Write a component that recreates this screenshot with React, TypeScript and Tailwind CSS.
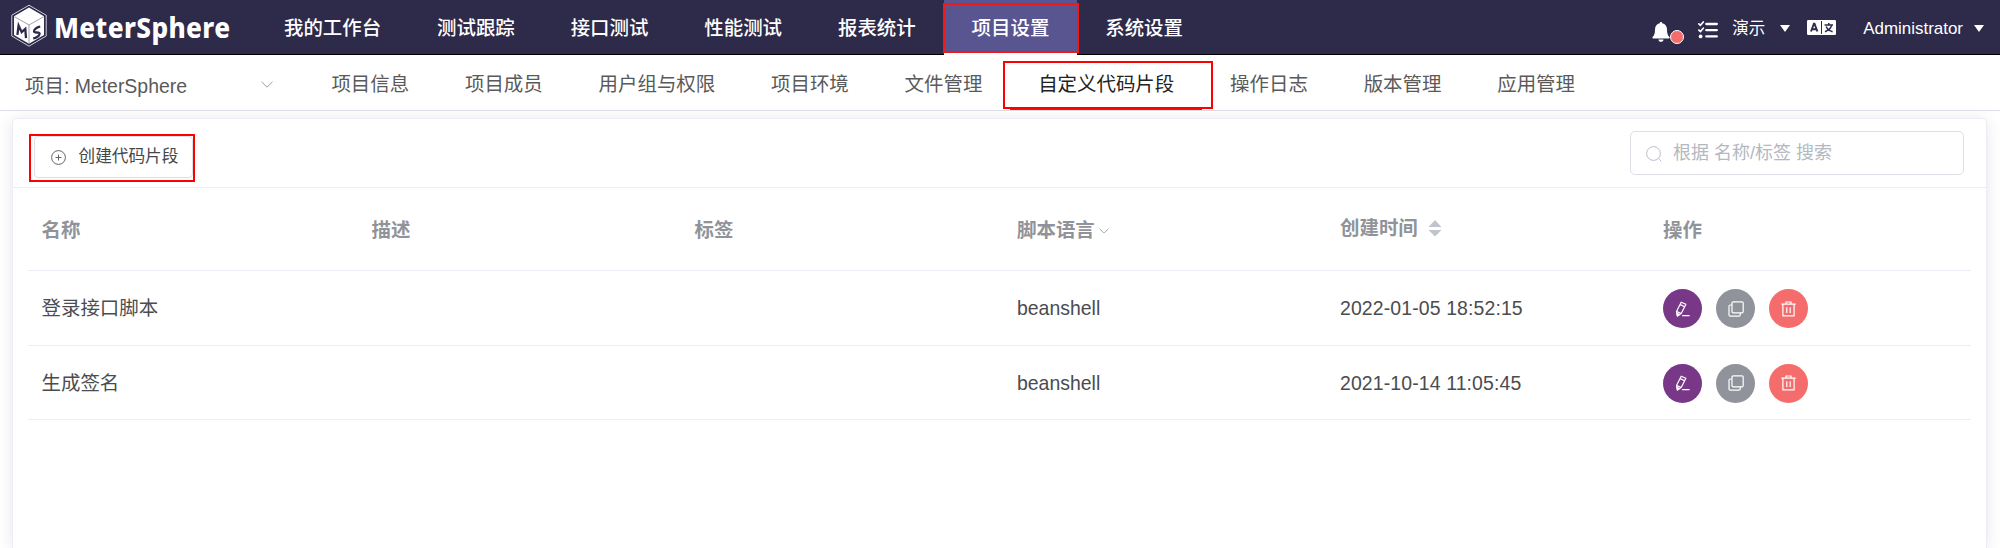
import React from "react";

const topItems = ["我的工作台", "测试跟踪", "接口测试", "性能测试", "报表统计", "项目设置", "系统设置"];
const subItems = ["项目信息", "项目成员", "用户组与权限", "项目环境", "文件管理", "自定义代码片段", "操作日志", "版本管理", "应用管理"];
const rows = [
  { name: "登录接口脚本", lang: "beanshell", time: "2022-01-05 18:52:15" },
  { name: "生成签名", lang: "beanshell", time: "2021-10-14 11:05:45" },
];

function Logo() {
  return (
    <svg width="38" height="44" viewBox="0 0 38 44" className="shrink-0">
      <path d="M19 1.2 36.2 11.2V32L19 42.2 1.8 32V11.2Z" fill="none" stroke="#cfcddb" strokeWidth="1" />
      <path d="M19 3.600 34 12.300V31L19 39.800 4 31V12.300Z" fill="#fff" />
      <path d="M4.200 12.600 19 21 33.800 12.600M19 21v18.500" fill="none" stroke="#77758a" strokeWidth="0.7" />
      <path d="M7.400 30.800 8.600 21.600 11.700 28.200 15.300 25 16 34.200" fill="none" stroke="#2d2a4a" strokeWidth="2.300" />
      <path d="M30.200 22.700C27.500 23 24 25 24 27.300c0 2.200 5.600.2 5.600 2.500 0 2.200-3.500 4.200-6.400 4.500" fill="none" stroke="#2d2a4a" strokeWidth="2.300" />
    </svg>
  );
}

function Bell() {
  return (
    <svg width="18" height="20" viewBox="0 0 18 20" fill="#fff">
      <path d="M9 0c.8 0 1.200.5 1.200 1.300C13.400 2 15 4.600 15 7.500c0 4 .7 5.800 2.400 7.500.5.600.2 1.400-.6 1.400H1.200c-.8 0-1.100-.8-.6-1.400C2.300 13.300 3 11.500 3 7.500c0-2.900 1.600-5.500 4.800-6.200C7.800.5 8.200 0 9 0ZM6.500 17.400h5c0 1.400-1.100 2.400-2.500 2.400s-2.500-1-2.500-2.400Z" />
    </svg>
  );
}

function Tasks() {
  return (
    <svg width="20" height="18" viewBox="0 0 20 18" fill="none" stroke="#fff" strokeLinecap="round">
      <path d="M8.300 3H18.800M8.300 9.200H18.800M8.300 15.400H18.800" strokeWidth="2.300" />
      <path d="m.9 2.900 1.500 1.400L5.300 1M.9 9.100l1.500 1.400L5.300 7.200" strokeWidth="1.700" />
      <circle cx="2.600" cy="15.400" r="1.900" fill="#fff" stroke="none" />
    </svg>
  );
}

function Language() {
  return (
    <svg width="29" height="15" viewBox="0 0 29 15">
      <rect width="29" height="15" rx="1.300" fill="#fff" />
      <path d="M14.500 1v13" stroke="#2d2a4a" strokeWidth="1" />
      <path d="M4 11.500 6.900 3.600h.6l2.900 7.900M5 9.300h4.500" fill="none" stroke="#2d2a4a" strokeWidth="1.900" />
      <path d="M17.600 5h8.400M21.800 3v2M24.600 5.200c-.6 2.800-3 5.200-6.600 6.500M19.200 6.500c1 2.500 3.300 4.500 6.400 5.200" fill="none" stroke="#2d2a4a" strokeWidth="1.500" />
    </svg>
  );
}

function Caret() {
  return (
    <svg width="10" height="7" viewBox="0 0 10 7" fill="#fff"><path d="M0 0h10L5 7Z" /></svg>
  );
}

function Chevron({ size, color }: { size: number; color: string }) {
  return (
    <svg width={size} height={size * 0.58} viewBox="0 0 12 7" fill="none" stroke={color}>
      <path d="m.5.800 5.500 5.400L11.500.8" />
    </svg>
  );
}

function Actions() {
  return (
    <div className="flex gap-[14px]">
      <button className="flex h-[39px] w-[39px] items-center justify-center rounded-full bg-[#783887]">
        <svg width="15" height="16" viewBox="0 0 15 16" fill="none" stroke="#fff" strokeWidth="1.200" strokeLinejoin="round" strokeLinecap="round">
          <path d="M6.200 1.200 10.900 3.300 6.200 12.500 2.400 14.900 1.500 10.400ZM5.200 3.600l4.500 2.100M1.500 10.400l4.700 2.100M7.600 14.700h6.600" />
          <path d="M1.900 12.300 4.400 13.600 2.400 14.900Z" fill="#fff" />
        </svg>
      </button>
      <button className="flex h-[39px] w-[39px] items-center justify-center rounded-full bg-[#909399]">
        <svg width="16" height="16" viewBox="0 0 16 16" fill="none" stroke="#fff" strokeWidth="1.200">
          <rect x="4" y=".8" width="11.200" height="11" rx="1.300" />
          <path d="M4 4H2.200Q1 4 1 5.200V14q0 1.200 1.200 1.200H11q1.200 0 1.200-1.200v-2.200" />
        </svg>
      </button>
      <button className="flex h-[39px] w-[39px] items-center justify-center rounded-full bg-[#f56c6c]">
        <svg width="15" height="16" viewBox="0 0 15 16" fill="none" stroke="#fff" strokeWidth="1.200">
          <path d="M.3 3.200h14.400M1.900 3.200v11.600h11.200V3.200M5 3V1h5v2M5.800 6.200v5.800M9.200 6.200v5.800" />
        </svg>
      </button>
    </div>
  );
}

export default function App() {
  return (
    <div className="flex h-[548px] w-[2000px] flex-col overflow-hidden bg-white font-['Liberation_Sans','Noto_Sans_CJK_SC',sans-serif] text-[19.450px] text-[#303133]">
      <header className="flex h-[55px] shrink-0 bg-[#2d2a4a] font-medium text-white shadow-[inset_0_-1px_0_#000]">
        <div className="flex w-[256px] shrink-0 items-start gap-[6px] pt-[4px] pl-[10px]">
          <Logo />
          <span className="origin-left scale-x-[0.935] pt-[6px] font-['Noto_Sans',sans-serif] text-[28px] leading-[34px] font-extrabold tracking-[0.4px]">MeterSphere</span>
        </div>
        <nav className="flex">
          {topItems.map((t) => (
            <div key={t} className={t === "项目设置" ? "relative h-[55px] border-b-2 border-white bg-[#595591] px-[27.950px] leading-[57px] whitespace-nowrap" : "px-[27.950px] leading-[57px] whitespace-nowrap"}>
              {t}
              {t === "项目设置" && <span className="absolute top-[3px] -right-[2px] -left-[1px] h-[50px] border-2 border-[#f01818]" />}
            </div>
          ))}
        </nav>
        <div className="ml-auto flex pr-[16px]">
          <div className="relative mt-[22px] mr-[28px] h-5 w-[18px]">
            <Bell />
            <span className="absolute top-[8px] left-[18px] h-[14px] w-[14px] rounded-full border border-white bg-[#f56c6c]" />
          </div>
          <div className="mt-[21px] mr-[14px]"><Tasks /></div>
          <span className="mr-[15px] text-[16.500px] leading-[57px] font-normal">演示</span>
          <div className="mt-[25px] mr-[17px]"><Caret /></div>
          <div className="mt-[20px] mr-[27px]"><Language /></div>
          <span className="mr-[11px] text-[16.950px] leading-[57px] font-normal">Administrator</span>
          <div className="mt-[25px]"><Caret /></div>
        </div>
      </header>
      <div className="flex h-[56px] shrink-0 border-b border-[#dcdfe6] text-[#5a5a5a]">
        <div className="flex w-[303.500px] shrink-0 items-start pl-[25px] leading-[62px]">
          <span className="w-[236px] whitespace-nowrap">项目: MeterSphere</span>
          <div className="pt-[26px]"><Chevron size={12} color="#9a9ca0" /></div>
        </div>
        {subItems.map((t) => (
          <div key={t} className={t === "自定义代码片段" ? "relative border-b border-[#783887] px-[27.920px] leading-[59px] whitespace-nowrap text-[#222]" : "px-[27.920px] leading-[59px] whitespace-nowrap"}>
            {t}
            {t === "自定义代码片段" && <span className="absolute top-[6px] -right-[11px] -left-[7px] h-[48px] border-2 border-[#f00]" />}
          </div>
        ))}
      </div>
      <main className="flex grow flex-col pt-[7px] pr-[13px] pl-[12px]">
        <section className="flex grow flex-col rounded-t-[5px] border-x border-t border-[#ebeef5] bg-white shadow-[0_2px_16px_rgba(0,0,0,0.1)]">
          <div className="flex h-[69px] shrink-0 justify-between border-b border-[#ebeef5] pr-[22px] pl-[16px]">
            <div className="mt-[15px] flex h-[48px] w-[166px] border-2 border-[#f00] pl-[3px]">
              <button className="flex h-[42px] w-full items-center rounded-[4px] border border-[#dcdfe6] pt-px pl-[16px] text-[16.650px] text-[#45474b]">
                <svg width="15" height="15" viewBox="0 0 15 15" fill="none" stroke="#606266" className="mr-[12.500px]">
                  <circle cx="7.500" cy="7.500" r="6.900" />
                  <path d="M4.500 7.500h6M7.500 4.500v6" />
                </svg>
                创建代码片段
              </button>
            </div>
            <label className="mt-[12px] flex h-[44px] w-[334px] items-center rounded-[5px] border border-[#dcdfe6] pt-px pl-[15px] text-[18px] text-[#b4b8c0]">
              <svg width="16" height="16" viewBox="0 0 16 16" fill="none" stroke="#b9bdc5" className="mr-[11px]">
                <circle cx="7.500" cy="7.500" r="6.900" />
                <path d="m12.500 12.500 2.800 2.800" />
              </svg>
              根据 名称/标签 搜索
            </label>
          </div>
          <div className="mx-[15px]">
            <div className="grid h-[83px] grid-cols-[330px_323px_322.500px_323px_323px_1fr] border-b border-[#ebeef5] pl-[13.500px] leading-[85px] font-bold text-[#909399]">
              <span>名称</span>
              <span>描述</span>
              <span>标签</span>
              <span className="flex items-center">脚本语言<span className="ml-[4px]"><Chevron size={10} color="#909399" /></span></span>
              <span className="flex leading-[81px]">
                创建时间
                <svg width="14" height="17" viewBox="0 0 14 17" fill="#c0c4cc" className="mt-[32px] ml-[10px]">
                  <path d="M.5 7 7 0l6.500 7ZM.5 10 7 16.500 13.500 10Z" />
                </svg>
              </span>
              <span>操作</span>
            </div>
            {rows.map((r) => (
              <div key={r.name} className="grid h-[74.500px] grid-cols-[330px_323px_322.500px_323px_323px_1fr] items-center border-b border-[#ebeef5] pt-[2px] pl-[13.500px] text-[#4a4c50]">
                <span>{r.name}</span>
                <span />
                <span />
                <span>{r.lang}</span>
                <span className="tracking-[0.120px]">{r.time}</span>
                <Actions />
              </div>
            ))}
          </div>
        </section>
      </main>
    </div>
  );
}
